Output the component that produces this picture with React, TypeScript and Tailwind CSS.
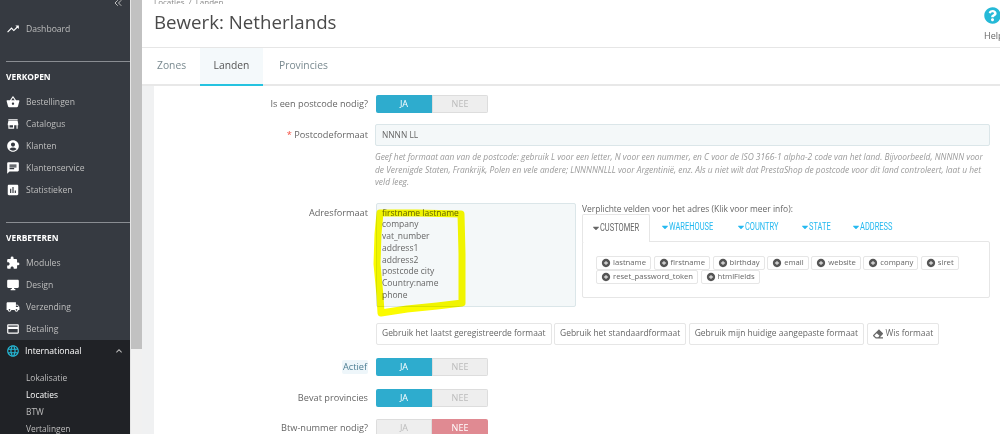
import React from "react";
import {
  MdTrendingUp, MdShoppingBasket, MdStore, MdAccountCircle, MdChat, MdAssessment,
  MdExtension, MdDesktopWindows, MdLocalShipping, MdCreditCard, MdLanguage, MdKeyboardArrowUp, MdAddCircle,
} from "react-icons/md";
import { FaCaretDown, FaEraser, FaQuestionCircle } from "react-icons/fa";
import { LuChevronsLeft } from "react-icons/lu";

const F = { fontFamily: '"Open Sans", "Liberation Sans", sans-serif' };
const NARROW = { fontFamily: '"Roboto", "Liberation Sans", sans-serif' };

function NavItem({ icon: Icon, label }: { icon: any; label: string }) {
  return (
    <div className="flex h-[22px] shrink-0 items-center pl-[6px] text-[8.6px] text-[#bebebe]">
      <Icon className="w-[14px] h-[14px] text-white shrink-0" />
      <span className="ml-[6px]">{label}</span>
    </div>
  );
}

function Toggle({ on = true, className = "" }: { on?: boolean; className?: string }) {
  return (
    <div className={`flex w-[112px] h-[18px] text-[9px] rounded-[2px] overflow-hidden ${className}`}>
      <div className={`w-[56px] flex items-center justify-center ${on ? "bg-[#2eacce] text-white" : "bg-[#eeeeee] text-[#bbbbbb] border border-[#dddddd]"}`}>JA</div>
      <div className={`w-[56px] flex items-center justify-center ${on ? "bg-[#eeeeee] text-[#bbbbbb] border border-[#dddddd]" : "bg-[#e08a92] text-white"}`}>NEE</div>
    </div>
  );
}

function Chip({ label }: { label: string }) {
  return (
    <span className="inline-flex items-center h-[14px] px-[4px] mr-[2.5px] border border-[#e6e6e6] rounded-[2px] text-[7.7px] text-[#666666] leading-none">
      <MdAddCircle className="w-[10px] h-[10px] text-[#555555] mr-[2px]" />
      {label}
    </span>
  );
}

function TabLabel({ label, active = false, w, tw }: { label: string; active?: boolean; w: string; tw: string }) {
  return (
    <div className={`flex items-center text-[11px] ${w} ${active ? "text-[#666666]" : "text-[#25b9f0]"}`} style={NARROW}>
      <FaCaretDown className="w-[10px] h-[10px] -ml-[2px] -mr-[1px] shrink-0" />
      <span className={`block origin-left scale-x-[0.68] whitespace-nowrap ${tw}`}>{label}</span>
    </div>
  );
}

function Btn({ children, m = "mr-[2.5px]" }: { children: React.ReactNode; m?: string }) {
  return (
    <div className={`flex items-center h-[22px] px-[5px] border border-[#e6e6e6] rounded-[2px] text-[8.45px] text-[#666666] whitespace-nowrap ${m}`}>
      {children}
    </div>
  );
}

export default function App() {
  return (
    <div className="flex w-[1000px] h-[434px] overflow-hidden bg-white" style={F}>
      <aside className="w-[130px] shrink-0 bg-[#363a41] flex flex-col overflow-hidden">
        <div className="flex shrink-0 justify-end pr-[6px] h-[8px] overflow-hidden text-[#bebebe]">
          <LuChevronsLeft className="w-[12px] h-[12px] -mt-[3px]" />
        </div>
        <div className="mt-[10px]">
          <NavItem icon={MdTrendingUp} label="Dashboard" />
        </div>
        <div className="ml-[6px] mt-[21px] border-t border-[#8a8d92]" />
        <div className="pl-[6px] mt-[8px] h-[14px] shrink-0 text-[8.4px] font-bold text-white leading-[14px]">VERKOPEN</div>
        <div className="mt-[7px]">
          <NavItem icon={MdShoppingBasket} label="Bestellingen" />
          <NavItem icon={MdStore} label="Catalogus" />
          <NavItem icon={MdAccountCircle} label="Klanten" />
          <NavItem icon={MdChat} label="Klantenservice" />
          <NavItem icon={MdAssessment} label="Statistieken" />
        </div>
        <div className="ml-[6px] mt-[21px] border-t border-[#8a8d92]" />
        <div className="pl-[6px] mt-[8px] h-[14px] shrink-0 text-[8.4px] font-bold text-white leading-[14px]">VERBETEREN</div>
        <div className="mt-[7px]">
          <NavItem icon={MdExtension} label="Modules" />
          <NavItem icon={MdDesktopWindows} label="Design" />
          <NavItem icon={MdLocalShipping} label="Verzending" />
          <NavItem icon={MdCreditCard} label="Betaling" />
        </div>
        <div className="flex-1 min-h-0 overflow-hidden bg-[#202226]">
          <div className="flex items-center h-[22px] pl-[6px] pr-[5px] text-[8.6px] text-white">
            <MdLanguage className="w-[14px] h-[14px] text-[#25b9d7]" />
            <span className="ml-[5px] flex-1">Internationaal</span>
            <MdKeyboardArrowUp className="w-[12px] h-[12px] text-[#bebebe]" />
          </div>
          <div className="mt-[7px] pl-[26px] text-[8.4px] text-[#bebebe]">
            <div className="h-[17px] leading-[17px]">Lokalisatie</div>
            <div className="h-[17px] leading-[17px] text-white">Locaties</div>
            <div className="h-[17px] leading-[17px]">BTW</div>
            <div className="h-[17px] leading-[17px]">Vertalingen</div>
          </div>
        </div>
      </aside>

      <div className="w-[12px] shrink-0 flex flex-col bg-[#f1f1f1] border-l border-[#e6e6e6]">
        <div className="h-[349px] bg-[#c1c1c1]" />
      </div>

      <main className="flex-1 min-w-0 flex flex-col">
        <header className="h-[48px] shrink-0 border-b border-[#e6e6e6] flex justify-between overflow-hidden">
          <div className="pl-[12px]">
            <div className="h-[5px] overflow-hidden text-[8px] text-[#888888] leading-[5px] -mt-[1px]">Locaties &nbsp;/&nbsp; Landen</div>
            <h1 className="text-[18.7px] text-[#4a4a4a] mt-[3px] leading-[30px]">Bewerk: Netherlands</h1>
          </div>
          <div className="w-[16px] overflow-hidden mt-[7px] flex flex-col items-start">
            <FaQuestionCircle className="w-[17px] h-[17px] text-[#25b9d7] shrink-0" />
            <span className="text-[9px] text-[#666666] mt-[5px] whitespace-nowrap">Help</span>
          </div>
        </header>

        <nav className="h-[38px] shrink-0 flex text-[10.3px] text-[#7a8a90] border-b-2 border-[#e8e8e8]">
          <div className="w-[58px] pl-[15px] flex items-center">Zones</div>
          <div className="w-[63px] flex items-center justify-center bg-[#f4f9fb] text-[#555555] border-b-2 border-[#25c3e0] h-[38px]">Landen</div>
          <div className="pl-[16px] flex items-center">Provincies</div>
        </nav>

        <div className="flex-1 min-h-0 bg-[#f0f1f2] pl-[12px] overflow-hidden">
          <div className="bg-white h-full pr-[10px] pt-[9px] text-[9.2px] text-[#666666]">
            <div className="flex h-[18px] items-center">
              <div className="w-[214px] text-right">Is een postcode nodig?</div>
              <Toggle className="ml-[8px]" />
            </div>

            <div className="flex mt-[11px] h-[22px] items-center">
              <div className="w-[214px] text-right"><span className="text-[#f54c3e]">* </span>Postcodeformaat</div>
              <div className="ml-[7px] flex-1 h-[22px] bg-[#f4f8f9] border border-[#dbe6e9] rounded-[2px] flex items-center px-[6px] text-[8.4px]">NNNN LL</div>
            </div>
            <p className="ml-[221px] mt-[5px] text-[8.4px] italic leading-[12.6px] text-[#9a9a9a]">
              Geef het formaat aan van de postcode: gebruik L voor een letter, N voor een nummer, en C voor de ISO 3166-1 alpha-2 code van het land. Bijvoorbeeld, NNNNN voor de Verenigde Staten, Frankrijk, Polen en vele andere; LNNNNNLLL voor Argentinië, enz. Als u niet wilt dat PrestaShop de postcode voor dit land controleert, laat u het veld leeg.
            </p>

            <div className="flex mt-[14px]">
              <div className="w-[214px] text-right pt-[3px]">Adresformaat</div>
              <div className="relative ml-[8px] w-[200px] h-[104px] bg-[#f4f8f9] border border-[#dbe6e9] rounded-[2px] pl-[5px] pt-[3px] text-[8.5px] leading-[11.7px] text-[#666666]">
                firstname lastname<br />company<br />vat_number<br />address1<br />address2<br />postcode city<br />Country:name<br />phone
                <svg className="absolute left-0 top-0 overflow-visible mix-blend-multiply" width="100" height="120" viewBox="0 0 100 120">
                  <path d="M3 9 L40 9 L84 10 L85 50 L85 99 L60 102 L30 105 L4 109 L3 92 L0 60 L1 30 L3 9" fill="none" stroke="#fbfb00" strokeWidth="7" strokeLinejoin="round" strokeLinecap="round" />
                </svg>
              </div>
              <div className="ml-[6px] flex-1 min-w-0">
                <div className="text-[8.45px] leading-[12px]">Verplichte velden voor het adres (Klik voor meer info):</div>
                <div className="flex mt-[-1px] h-[27px]">
                  <div className="w-[68px] h-[28px] relative z-10 bg-white border border-b-0 border-[#e6e6e6] rounded-t-[2px] flex items-center pl-[10px]">
                    <TabLabel label="CUSTOMER" active w="" tw="w-[48px]" />
                  </div>
                  <TabLabel label="WAREHOUSE" w="ml-[12px] w-[76px]" tw="w-[62px]" />
                  <TabLabel label="COUNTRY" w="w-[64px]" tw="w-[48px]" />
                  <TabLabel label="STATE" w="w-[51px]" tw="w-[30px]" />
                  <TabLabel label="ADDRESS" w="" tw="w-[46px]" />
                </div>
                <div className="h-[57px] border border-[#e6e6e6] rounded-[2px] pl-[13px] pt-[14px] leading-[14px]">
                  <div className="flex"><Chip label="lastname" /><Chip label="firstname" /><Chip label="birthday" /><Chip label="email" /><Chip label="website" /><Chip label="company" /><Chip label="siret" /></div>
                  <div className="flex"><Chip label="reset_password_token" /><Chip label="htmlFields" /></div>
                </div>
              </div>
            </div>

            <div className="flex ml-[222px] mt-[16px]">
              <Btn>Gebruik het laatst geregistreerde formaat</Btn>
              <Btn>Gebruik het standaardformaat</Btn>
              <Btn>Gebruik mijn huidige aangepaste formaat</Btn>
              <Btn m=""><FaEraser className="w-[10px] h-[10px] mr-[3px]" />Wis formaat</Btn>
            </div>

            <div className="flex mt-[13px] h-[18px] items-center">
              <div className="w-[214px] flex justify-end">
                <span className="bg-[#eef6fa] rounded-[2px] px-[1px] text-[#4d7d92]">Actief</span>
              </div>
              <Toggle className="ml-[8px]" />
            </div>
            <div className="flex mt-[13px] h-[18px] items-center">
              <div className="w-[214px] text-right">Bevat provincies</div>
              <Toggle className="ml-[8px]" />
            </div>
            <div className="flex mt-[12px] h-[18px] items-center">
              <div className="w-[214px] text-right">Btw-nummer nodig?</div>
              <Toggle on={false} className="ml-[8px]" />
            </div>
          </div>
        </div>
      </main>
    </div>
  );
}
